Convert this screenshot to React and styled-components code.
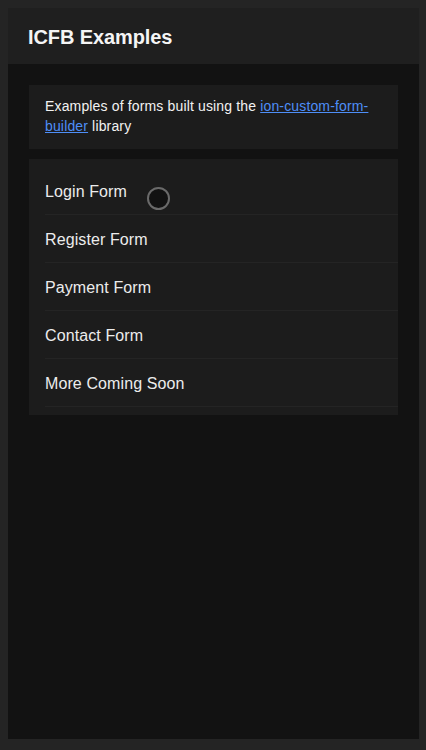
import React from 'react';
import styled, {createGlobalStyle} from 'styled-components';

const GlobalStyle = createGlobalStyle`
  html, body {
    margin: 0;
    padding: 0;
    background: #242424;
    font-family: "Liberation Sans", Arial, sans-serif;
    -webkit-font-smoothing: antialiased;
  }
`;

const Frame = styled.div`
  height: 750px;
  padding: 8px 7px 11px 8px;
  box-sizing: border-box;
  background: #242424;
`;

const AppShell = styled.div`
  height: 100%;
  display: flex;
  flex-direction: column;
  background: #121212;
`;

const Toolbar = styled.header`
  height: 56px;
  display: flex;
  align-items: center;
  padding: 2px 20px 0 20px;
  box-sizing: border-box;
  background: #1f1f1f;
`;

const Title = styled.h1`
  margin: 0;
  font-size: 20px;
  font-weight: 600;
  color: #f5f5f5;
  letter-spacing: -0.1px;
`;

const Content = styled.main`
  flex: 1;
  display: flex;
  flex-direction: column;
  gap: 10px;
  padding: 21px 21px 0 21px;
`;

const Card = styled.section`
  background: #1c1c1c;
  padding: ${(p) => p.$padding || '0'};
`;

const Intro = styled.p`
  margin: 0;
  font-size: 14px;
  line-height: 20px;
  letter-spacing: 0.15px;
  color: #f2f2f2;
`;

const Link = styled.a`
  color: #4e8ef7;
  text-decoration: underline;
`;

const List = styled.ul`
  list-style: none;
  margin: 0;
  padding: 8px 0 8px 16px;
`;

const Item = styled.li`
  position: relative;
  height: 48px;
  box-sizing: border-box;
  display: flex;
  align-items: center;
  padding-top: 3px;
  font-size: 16px;
  letter-spacing: 0.1px;
  color: #ececec;
  border-bottom: 1px solid #242424;
`;

const Cursor = styled.span`
  position: absolute;
  left: 102px;
  top: 20px;
  width: 19px;
  height: 19px;
  border-radius: 50%;
  border: 2px solid #6a6a6a;
  background: #121212;
`;

const forms = ['Login Form', 'Register Form', 'Payment Form', 'Contact Form', 'More Coming Soon'];

const App = () => (
  <>
    <GlobalStyle />
    <Frame>
      <AppShell>
        <Toolbar>
          <Title>ICFB Examples</Title>
        </Toolbar>
        <Content>
          <Card $padding='11px 16px 13px 16px'>
            <Intro>
              Examples of forms built using the <Link href='#'>ion-custom-form-builder</Link> library
            </Intro>
          </Card>
          <Card>
            <List>
              {forms.map((name, i) => (
                <Item key={name}>
                  {name}
                  {i === 0 && <Cursor />}
                </Item>
              ))}
            </List>
          </Card>
        </Content>
      </AppShell>
    </Frame>
  </>
);

export default App;
